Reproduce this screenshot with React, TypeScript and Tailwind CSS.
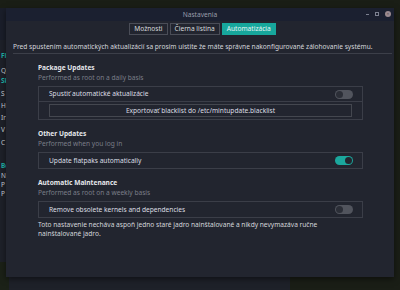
import React from "react";

type Props = { on?: boolean };

function Toggle({ on }: Props) {
  return on ? (
    <div className="flex h-[9px] w-[18px] items-center justify-end rounded-full bg-[#1ba79d] pr-[1px]">
      <div className="h-[7px] w-[7px] rounded-full bg-[#23262f]" />
    </div>
  ) : (
    <div className="flex h-[9px] w-[18px] items-center rounded-full bg-[#51545d] pl-[1px]">
      <div className="h-[7px] w-[7px] rounded-full bg-[#2b2e37]" />
    </div>
  );
}

function Section({ title, sub, children }: { title: string; sub: string; children: React.ReactNode }) {
  return (
    <div className="flex flex-col">
      <div className="h-[10px] text-[6.6px] font-bold leading-[10px] text-[#e4e6ea]">{title}</div>
      <div className="h-[10px] text-[6.6px] leading-[10px] text-[#7a7e88]">{sub}</div>
      <div className="mt-[3px] w-[325px] border border-[#3b3e48]">{children}</div>
    </div>
  );
}

export default function App() {
  const behind = [
    { t: "Fil", y: "top-[45px]", c: "text-[#1fb5aa] font-bold" },
    { t: "Q", y: "top-[60px]", c: "text-[#cfd2d8]" },
    { t: "Sk", y: "top-[70px]", c: "text-[#1fb5aa] font-bold" },
    { t: "S", y: "top-[83px]", c: "text-[#cfd2d8]" },
    { t: "H", y: "top-[95px]", c: "text-[#cfd2d8]" },
    { t: "Ir", y: "top-[107px]", c: "text-[#cfd2d8]" },
    { t: "V", y: "top-[119px]", c: "text-[#cfd2d8]" },
    { t: "C", y: "top-[132px]", c: "text-[#cfd2d8]" },
    { t: "Bc", y: "top-[155px]", c: "text-[#1fb5aa] font-bold" },
    { t: "N", y: "top-[165px]", c: "text-[#cfd2d8]" },
    { t: "P", y: "top-[174px]", c: "text-[#cfd2d8]" },
    { t: "P", y: "top-[183px]", c: "text-[#cfd2d8]" },
  ];
  return (
    <div
      className="relative h-[290px] w-[400px] overflow-hidden bg-[#1a1e16]"
      style={{ fontFamily: '"Noto Sans", "Open Sans", sans-serif' }}
    >
      {/* window behind */}
      <div className="absolute left-0 top-[8px] h-[282px] w-[290px] bg-[#1e2129]">
        <div className="h-[32px] bg-[#1a1e2a]" />
        {behind.map((b, i) => (
          <div key={i} className={`absolute left-[1px] text-[6.5px] leading-[6px] ${b.y} ${b.c}`}>
            {b.t}
          </div>
        ))}
      </div>
      <div className="absolute left-0 top-[262px] h-[28px] w-[9px] bg-[#1b2117]" />

      {/* dialog */}
      <div className="absolute left-[6px] top-[8px] flex h-[269px] w-[388px] flex-col bg-[#22252f] shadow-[0_2px_6px_rgba(0,0,0,0.5)]">
        <div className="relative flex h-[13px] items-center justify-center bg-[#1b2030]">
          <span className="text-[6.6px] text-[#9a9eab]">Nastavenia</span>
          <div className="absolute right-[3px] top-[3px] flex items-center gap-[6px]">
            <span className="h-[1px] w-[3px] bg-[#7c8090]" />
            <span className="h-[4px] w-[4px] border border-[#7c8090]" />
            <span className="flex h-[6px] w-[6px] items-center justify-center rounded-full bg-[#9a8a90]">
              <span className="text-[4px] leading-none text-[#3a3036]">×</span>
            </span>
          </div>
        </div>

        <div className="mt-[2px] flex justify-center gap-[2px] pl-[5px] text-[6.6px] leading-none">
          <div className="flex h-[12px] items-center border border-[#4a4d57] px-[4px] text-[#d8dade]">Možnosti</div>
          <div className="flex h-[12px] items-center border border-[#4a4d57] px-[4px] text-[#d8dade]">Čierna listina</div>
          <div className="flex h-[12px] items-center bg-[#17a79c] px-[5px] text-[#e8f6f5]">Automatizácia</div>
        </div>

        <div className="mt-[7px] whitespace-nowrap pl-[7px] text-[6.6px] leading-[10px] text-[#d4d6db]">
          Pred spustením automatických aktualizácií sa prosím uistite že máte správne nakonfigurované zálohovanie systému.
        </div>
        <div className="ml-[7px] mr-[2px] mt-[1px] h-px bg-[#3c3f49]" />

        <div className="flex flex-col gap-[9px] pl-[32px] pt-[9px]">
          <Section title="Package Updates" sub="Performed as root on a daily basis">
            <div className="flex h-[15px] items-center justify-between border-b border-[#3b3e48] pl-[10px] pr-[9px] text-[6.6px] text-[#dcdee3]">
              <span>Spustiť automatické aktualizácie</span>
              <Toggle />
            </div>
            <div className="px-[10px] py-[2px]">
              <div className="flex h-[13px] items-center justify-center border border-[#44474f] text-[6.6px] text-[#dcdee3]">
                Exportovať blacklist do /etc/mintupdate.blacklist
              </div>
            </div>
          </Section>

          <Section title="Other Updates" sub="Performed when you log in">
            <div className="flex h-[15px] items-center justify-between pl-[10px] pr-[9px] text-[6.6px] text-[#dcdee3]">
              <span>Update flatpaks automatically</span>
              <Toggle on />
            </div>
          </Section>

          <Section title="Automatic Maintenance" sub="Performed as root on a weekly basis">
            <div className="flex h-[15px] items-center justify-between pl-[10px] pr-[9px] text-[6.6px] text-[#dcdee3]">
              <span>Remove obsolete kernels and dependencies</span>
              <Toggle />
            </div>
          </Section>
        </div>

        <div className="mt-[2px] w-[335px] pl-[32px] text-[6.6px] leading-[9px] text-[#d4d6db]">
          Toto nastavenie necháva aspoň jedno staré jadro nainštalované a nikdy nevymazáva ručne nainštalované jadro.
        </div>
      </div>
    </div>
  );
}
